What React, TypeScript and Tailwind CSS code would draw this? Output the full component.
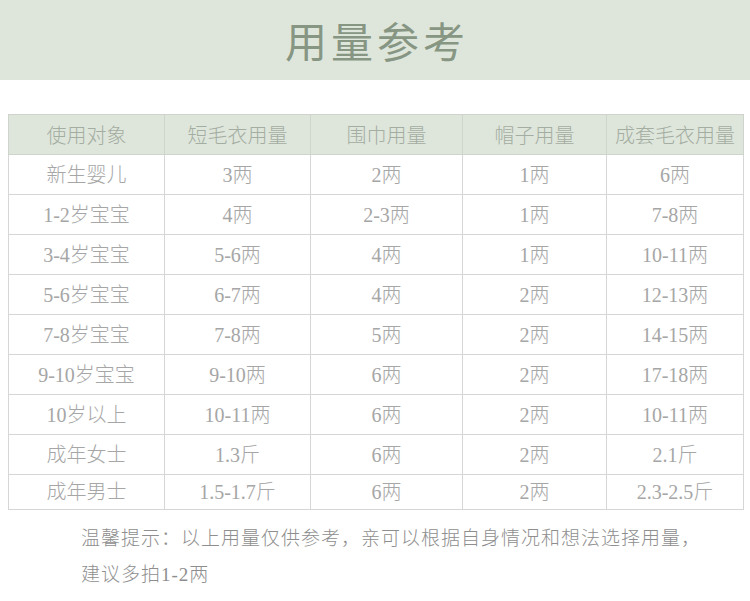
const header = ["使用对象", "短毛衣用量", "围巾用量", "帽子用量", "成套毛衣用量"];

const rows = [
  ["新生婴儿", "3两", "2两", "1两", "6两"],
  ["1-2岁宝宝", "4两", "2-3两", "1两", "7-8两"],
  ["3-4岁宝宝", "5-6两", "4两", "1两", "10-11两"],
  ["5-6岁宝宝", "6-7两", "4两", "2两", "12-13两"],
  ["7-8岁宝宝", "7-8两", "5两", "2两", "14-15两"],
  ["9-10岁宝宝", "9-10两", "6两", "2两", "17-18两"],
  ["10岁以上", "10-11两", "6两", "2两", "10-11两"],
  ["成年女士", "1.3斤", "6两", "2两", "2.1斤"],
  ["成年男士", "1.5-1.7斤", "6两", "2两", "2.3-2.5斤"],
];

const widths = ["w-[156px]", "w-[146px]", "w-[152px]", "w-[144px]", "w-[137px]"];

export default function App() {
  return (
    <div className="w-[750px] h-[601px] bg-white overflow-hidden font-['Liberation_Serif','Noto_Sans_CJK_SC',serif]">
      <div className="h-[80px] bg-[#dee6dc] flex items-center justify-center">
        <h1 className="text-[42px] leading-none tracking-[4px] text-[#879683] font-['Noto_Sans_CJK_SC',sans-serif] pl-[4px]">
          用量参考
        </h1>
      </div>

      <table className="mt-[34px] ml-[8px] w-[735px] table-fixed border-collapse">
        <colgroup>
          {widths.map((w, i) => (
            <col key={i} className={w} />
          ))}
        </colgroup>
        <thead>
          <tr className="h-[40px] bg-[#dee6dc]">
            {header.map((h) => (
              <th
                key={h}
                className="border border-[#cfd4cd] font-light text-[20px] text-[#a4ada1] font-['Noto_Sans_CJK_SC',sans-serif]"
              >
                {h}
              </th>
            ))}
          </tr>
        </thead>
        <tbody>
          {rows.map((r, i) => (
            <tr key={i} className={i === rows.length - 1 ? "h-[35px]" : "h-[40px]"}>
              {r.map((c, j) => (
                <td
                  key={j}
                  className="border border-[#d6d6d6] text-center text-[20px] font-light text-[#a6a6a6]"
                >
                  {c}
                </td>
              ))}
            </tr>
          ))}
        </tbody>
      </table>

      <div className="mt-[11px] pl-[81px] text-[19px] leading-[36px] tracking-[1px] font-light text-[#8e8e8e]">
        <p>温馨提示：以上用量仅供参考，亲可以根据自身情况和想法选择用量，</p>
        <p>建议多拍1-2两</p>
      </div>
    </div>
  );
}
